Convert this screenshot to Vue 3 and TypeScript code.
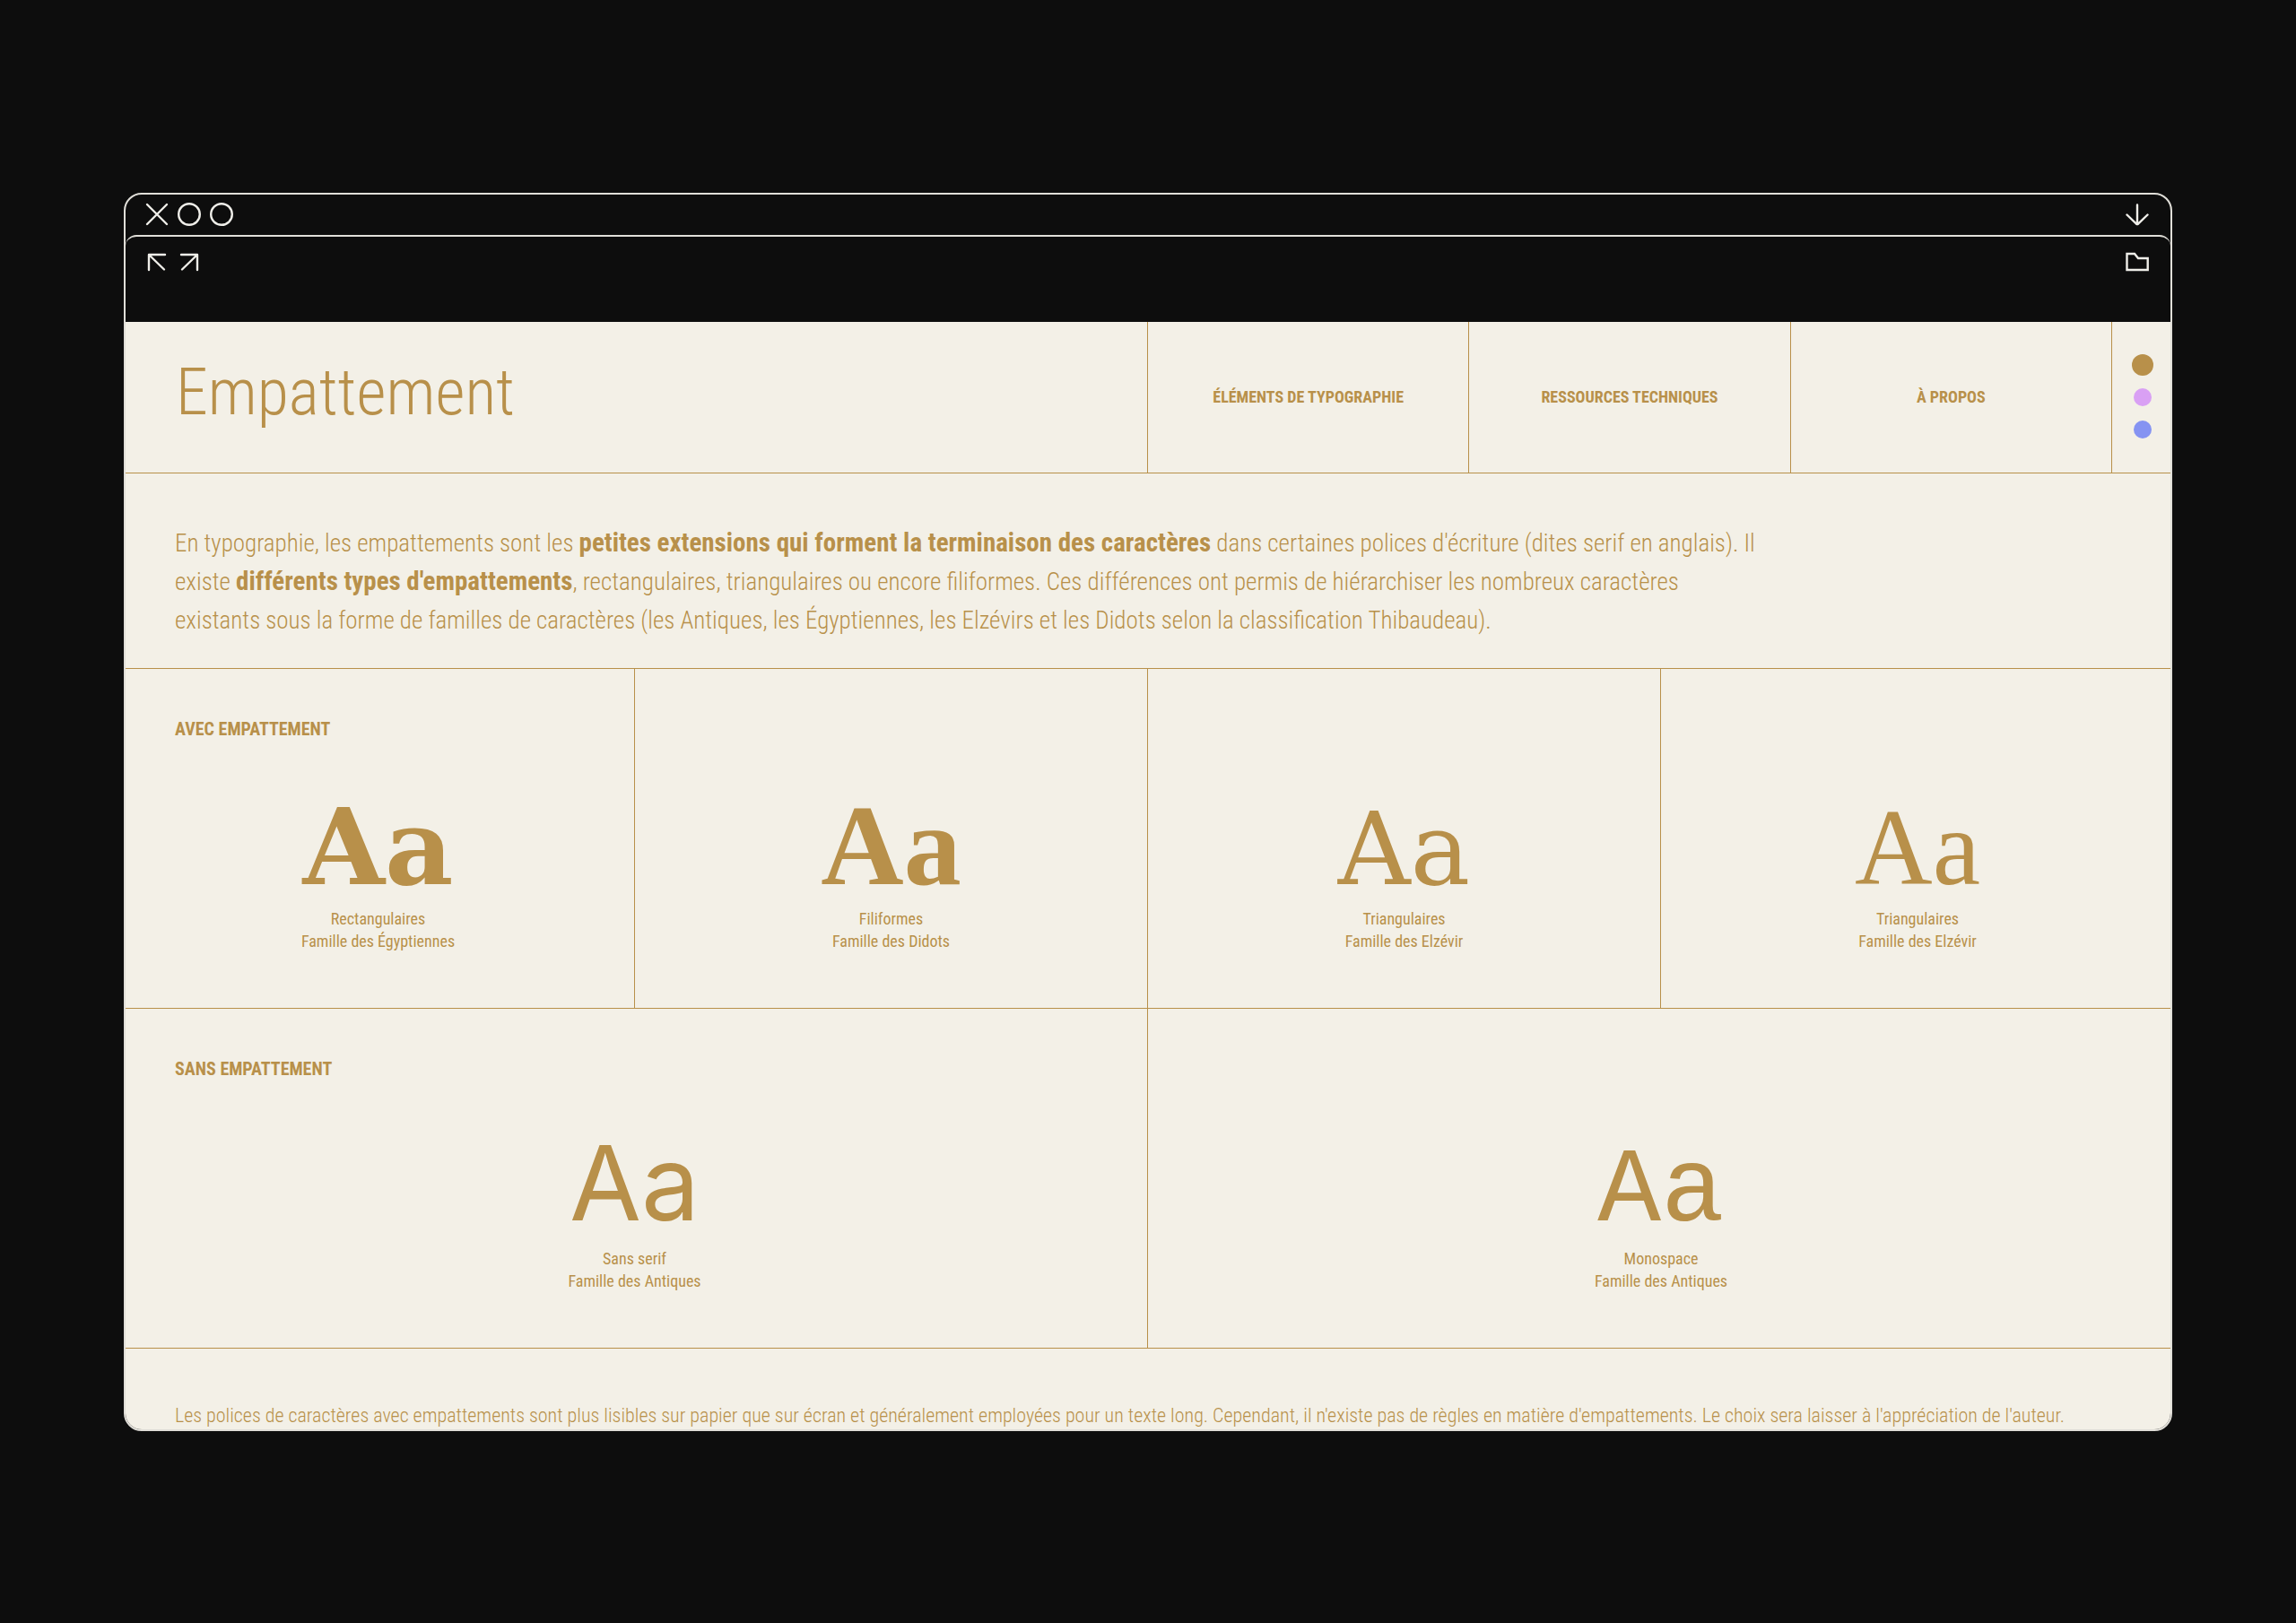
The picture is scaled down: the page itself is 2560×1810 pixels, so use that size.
<script setup lang="ts">
import { computed, ref } from 'vue'

interface Specimen {
  face: string
  name: string
  family: string
}

interface Theme {
  id: string
  label: string
  color: string
}

const themes: Theme[] = [
  { id: 'ocre', label: 'Ocre', color: '#b8904a' },
  { id: 'mauve', label: 'Mauve', color: '#d9a0f4' },
  { id: 'bleu', label: 'Bleu', color: '#8593f2' },
]

const navigation: string[] = ['Éléments de typographie', 'Ressources techniques', 'À propos']

const serifs: Specimen[] = [
  { face: 'slab', name: 'Rectangulaires', family: 'Famille des Égyptiennes' },
  { face: 'didone', name: 'Filiformes', family: 'Famille des Didots' },
  { face: 'garalde', name: 'Triangulaires', family: 'Famille des Elzévir' },
  { face: 'transitional', name: 'Triangulaires', family: 'Famille des Elzévir' },
]

const sans: Specimen[] = [
  { face: 'grotesque', name: 'Sans serif', family: 'Famille des Antiques' },
  { face: 'mono', name: 'Monospace', family: 'Famille des Antiques' },
]

const theme = ref<string>('ocre')
const accent = computed(() => themes.find((t) => t.id === theme.value)?.color ?? themes[0].color)
</script>

<template>
  <div class="desktop" :style="{ '--accent': accent }">
    <div class="window">
      <div class="titlebar">
        <div class="group">
          <button type="button" aria-label="Fermer">
            <svg viewBox="0 0 26 26"><path d="M2 2 24 24M24 2 2 24" /></svg>
          </button>
          <button type="button" aria-label="Réduire">
            <svg viewBox="0 0 26 26"><circle cx="13" cy="13" r="11.800" /></svg>
          </button>
          <button type="button" aria-label="Agrandir">
            <svg viewBox="0 0 26 26"><circle cx="13" cy="13" r="11.800" /></svg>
          </button>
        </div>
        <button type="button" aria-label="Télécharger">
          <svg viewBox="0 0 26 26"><path d="M13 2.500V24M1.500 13.500 12 23.700Q13 24.500 14 23.700L24.500 13.500" /></svg>
        </button>
      </div>

      <div class="toolbar">
        <div class="group">
          <button type="button" aria-label="Précédent">
            <svg viewBox="0 0 26 26"><path d="M22 5H4V22M5 6 21 21.500" /></svg>
          </button>
          <button type="button" aria-label="Suivant">
            <svg viewBox="0 0 26 26"><path d="M4 5H22V22M21 6 5 21.500" /></svg>
          </button>
        </div>
        <button type="button" aria-label="Dossier">
          <svg viewBox="0 0 26 26"><path d="M1.500 4H10L14 9H24.700V22H1.500Z" stroke-linejoin="miter" /></svg>
        </button>
      </div>

      <div class="page">
        <header class="header">
          <h1>Empattement</h1>
          <nav>
            <a v-for="item in navigation" :key="item" href="#">{{ item }}</a>
          </nav>
          <div class="themes" role="radiogroup" aria-label="Couleur">
            <input
              v-for="t in themes"
              :key="t.id"
              v-model="theme"
              type="radio"
              name="theme"
              :value="t.id"
              :aria-label="t.label"
              :style="{ backgroundColor: t.color }"
            />
          </div>
        </header>

        <p class="intro">
          En typographie, les empattements sont les
          <strong>petites extensions qui forment la terminaison des caractères</strong> dans certaines
          polices d'écriture (dites serif en anglais). Il existe
          <strong>différents types d'empattements</strong>, rectangulaires, triangulaires ou encore
          filiformes. Ces différences ont permis de hiérarchiser les nombreux caractères existants sous
          la forme de familles de caractères (les Antiques, les Égyptiennes, les Elzévirs et les Didots
          selon la classification Thibaudeau).
        </p>

        <section class="row four">
          <div v-for="(s, i) in serifs" :key="s.face" class="cell">
            <h2 v-if="i === 0">Avec empattement</h2>
            <figure>
              <div class="sample"><span :class="s.face">Aa</span></div>
              <figcaption>{{ s.name }}<br />{{ s.family }}</figcaption>
            </figure>
          </div>
        </section>

        <section class="row two">
          <div v-for="(s, i) in sans" :key="s.face" class="cell">
            <h2 v-if="i === 0">Sans empattement</h2>
            <figure>
              <div class="sample"><span :class="s.face">Aa</span></div>
              <figcaption>{{ s.name }}<br />{{ s.family }}</figcaption>
            </figure>
          </div>
        </section>

        <p class="note">
          Les polices de caractères avec empattements sont plus lisibles sur papier que sur écran et
          généralement employées pour un texte long. Cependant, il n'existe pas de règles en matière
          d'empattements. Le choix sera laisser à l'appréciation de l'auteur.
        </p>
      </div>
    </div>
  </div>
</template>

<style>
body {
  background: #0d0d0d;
}
</style>

<style scoped>
.desktop {
  box-sizing: border-box;
  display: flex;
  flex-direction: column;
  justify-content: center;
  min-height: 100vh;
  padding: 0 138px;
  background: #0d0d0d;
  color: var(--accent);
  font-family: "Roboto Condensed", Roboto, sans-serif;
  font-weight: 300;
}

.window {
  border: 2px solid #e0ded8;
  border-radius: 20px;
  overflow: hidden;
  background: #0d0d0d;
}

.titlebar,
.toolbar {
  display: flex;
  justify-content: space-between;
  padding: 0 24px 0 22px;
}

.titlebar {
  align-items: center;
  height: 45px;
}

.toolbar {
  align-items: flex-start;
  height: 80px;
  padding-top: 15px;
  border-top: 2px solid #e0ded8;
  border-radius: 12px 12px 0 0;
}

.group {
  display: flex;
  gap: 10px;
}

button {
  width: 26px;
  height: 26px;
  padding: 0;
  border: 0;
  background: none;
  cursor: pointer;
}

svg {
  display: block;
  width: 26px;
  height: 26px;
  fill: none;
  stroke: #efeee9;
  stroke-width: 2.4;
  stroke-linecap: round;
  stroke-linejoin: round;
}

.page {
  background: #f3f0e7;
}

/* The grid runs slightly past the frame on both sides and is clipped by it. */
.header,
.row {
  display: grid;
  margin: 0 -4px;
  border-bottom: 1px solid var(--accent);
}

.header {
  grid-template-columns: 50% 1fr 69px;
  height: 168px;
}

h1 {
  margin: 0;
  padding: 39px 0 0 60px;
  border-right: 1px solid var(--accent);
  font-size: 72px;
  font-weight: 300;
  line-height: 80px;
}

nav {
  display: grid;
  grid-template-columns: repeat(3, 1fr);
}

nav a {
  display: flex;
  align-items: center;
  justify-content: center;
  border-right: 1px solid var(--accent);
  color: inherit;
  font-size: 18px;
  font-weight: 700;
  line-height: 24px;
  text-decoration: none;
  text-transform: uppercase;
}

.themes {
  display: grid;
  grid-auto-rows: 36px;
  align-content: center;
  place-items: center;
  padding-right: 2px;
}

.themes input {
  width: 20px;
  height: 20px;
  margin: 0;
  border-radius: 50%;
  appearance: none;
  cursor: pointer;
}

.themes input:checked {
  width: 24px;
  height: 24px;
}

.intro {
  margin: 0;
  padding: 57px 458px 31px 55px;
  border-bottom: 1px solid var(--accent);
  font-size: 27px;
  line-height: 43px;
}

strong {
  font-size: 29px;
  font-weight: 700;
  line-height: 29px;
}

.four {
  grid-template-columns: repeat(4, 1fr);
}

.two {
  grid-template-columns: repeat(2, 1fr);
}

.cell {
  display: flex;
  flex-direction: column;
  box-sizing: border-box;
  height: 378px;
  padding: 55px 0 62px;
}

.cell:not(:last-child) {
  border-right: 1px solid var(--accent);
}

h2 {
  margin: 0;
  padding-left: 59px;
  font-size: 20px;
  font-weight: 700;
  line-height: 24px;
  text-transform: uppercase;
}

figure {
  margin: auto 0 0;
  text-align: center;
}

/* A zero line height on the glyphs keeps every face on the same baseline. */
.sample {
  font-size: 24px;
  line-height: 76px;
}

.four .sample {
  line-height: 68px;
}

.sample span {
  line-height: 0;
}

.slab {
  font-family: "DejaVu Serif", serif;
  font-size: 118px;
  font-weight: 700;
}

.didone {
  font-family: "Liberation Serif", serif;
  font-size: 128px;
  font-weight: 700;
}

.garalde {
  font-family: "DejaVu Serif", serif;
  font-size: 112px;
  font-weight: 400;
}

.transitional {
  font-family: "Liberation Serif", serif;
  font-size: 120px;
  font-weight: 400;
}

.grotesque {
  font-family: Inter, sans-serif;
  font-size: 116px;
  font-weight: 400;
}

.mono {
  font-family: "Liberation Mono", monospace;
  font-size: 118px;
  font-weight: 400;
}

figcaption {
  font-size: 18px;
  font-weight: 400;
  line-height: 25px;
}

.note {
  margin: 0;
  padding: 60px 55px 0;
  height: 30px;
  font-size: 22px;
  line-height: 30px;
  white-space: nowrap;
}
</style>
